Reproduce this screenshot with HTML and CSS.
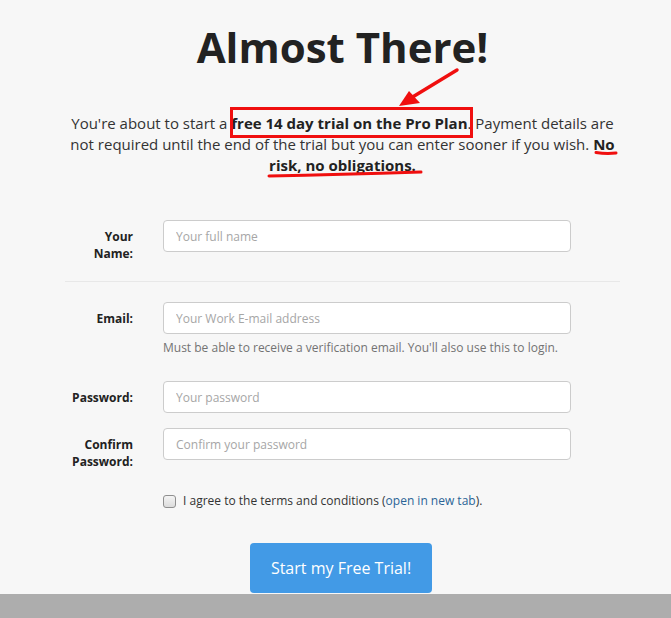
FILE: index.html
```html
<!DOCTYPE html>
<html lang="en">
<head>
<meta charset="utf-8">
<title>Almost There!</title>
<link rel="stylesheet" href="styles.css">
</head>
<body>
<div class="page">
  <main class="container">
    <h1 class="title">Almost There!</h1>
    <p class="intro">You're about to start a <strong>free 14 day trial on the Pro Plan</strong>. Payment details are not required until the end of the trial but you can enter sooner if you wish. <strong>No risk, no obligations.</strong></p>

    <form class="form">
      <div class="row">
        <label class="label">Your<br>Name:</label>
        <div class="field"><input class="input" type="text" placeholder="Your full name"></div>
      </div>
      <hr class="divider">
      <div class="row">
        <label class="label">Email:</label>
        <div class="field">
          <input class="input" type="text" placeholder="Your Work E-mail address">
          <p class="help">Must be able to receive a verification email. You'll also use this to login.</p>
        </div>
      </div>
      <div class="row">
        <label class="label">Password:</label>
        <div class="field"><input class="input" type="password" placeholder="Your password"></div>
      </div>
      <div class="row">
        <label class="label">Confirm<br>Password:</label>
        <div class="field"><input class="input" type="password" placeholder="Confirm your password"></div>
      </div>
      <div class="row check-row">
        <span></span>
        <label class="check"><span class="box"></span>I agree to the terms and conditions (<a href="#" class="link">open in new tab</a>).</label>
      </div>
      <div class="actions">
        <button type="button" class="btn">Start my Free Trial!</button>
      </div>
    </form>
  </main>
  <footer class="footer"></footer>

  <svg class="annot" width="671" height="618" viewBox="0 0 671 618" xmlns="http://www.w3.org/2000/svg">
    <g fill="none" stroke="#f00f0f" stroke-linecap="round" stroke-linejoin="round">
      <rect x="231.5" y="108.5" width="240" height="28" stroke-width="3" stroke-linecap="butt" stroke-linejoin="miter"/>
      <line x1="457" y1="70" x2="406" y2="101" stroke-width="3.5"/>
      <path d="M596 152.5 Q606 154 616 153" stroke-width="3"/>
      <path d="M269 176 Q340 174.5 421 172" stroke-width="3"/>
    </g>
    <polygon points="399,106 409,91 420,103" fill="#f00f0f"/>
  </svg>
</div>
</body>
</html>
```

FILE: styles.css
```css
* { box-sizing: border-box; }

html, body {
  margin: 0;
  padding: 0;
  background: #f7f7f7;
}

body {
  font-family: "Open Sans", "Liberation Sans", sans-serif;
  color: #333;
}

.page {
  position: relative;
  width: 671px;
  height: 618px;
  overflow: hidden;
  display: flex;
  flex-direction: column;
}

.container {
  width: 555px;
  margin-left: 65px;
  flex: 1;
}

.title {
  margin: 20px 0 0;
  font-size: 42px;
  line-height: 54px;
  font-weight: 700;
  text-align: center;
  color: #222;
}

.intro {
  margin: 39px 0 0;
  font-size: 15px;
  line-height: 21px;
  text-align: center;
  color: #333;
}

.intro strong { font-weight: 700; color: #222; }

.form {
  margin-top: 44px;
}

.row {
  display: grid;
  grid-template-columns: 68px 408px;
  column-gap: 30px;
  margin-bottom: 15px;
}

.label {
  text-align: right;
  font-size: 12px;
  line-height: 17px;
  font-weight: 700;
  padding-top: 8px;
  color: #222;
}

.input {
  display: block;
  width: 100%;
  height: 32px;
  border: 1px solid #cccccc;
  border-radius: 4px;
  background: #fff;
  padding: 0 12px;
  font-family: "Open Sans", "Liberation Sans", sans-serif;
  font-size: 12px;
  color: #333;
  outline: none;
}

.input::placeholder { color: #a6a6a6; }

.divider {
  border: 0;
  border-top: 1px solid #e8e8e8;
  margin: 19px 0 20px;
}

.help {
  margin: 5px 0 9px;
  font-size: 12px;
  line-height: 18px;
  color: #737373;
}

.check-row {
  margin-top: 22px;
  margin-bottom: 0;
}

.check {
  display: flex;
  align-items: center;
  font-size: 12px;
  line-height: 18px;
  color: #333;
}

.box {
  width: 13px;
  height: 13px;
  border: 1px solid #8f8f8f;
  border-radius: 3px;
  background: linear-gradient(#f4f4f4, #dcdcdc);
  margin-right: 7px;
  flex: none;
}

.link {
  color: #2a6496;
  text-decoration: none;
}

.actions {
  display: flex;
  margin-top: 33px;
  padding-left: 185px;
}

.btn {
  width: 182px;
  height: 50px;
  border: 0;
  border-radius: 4px;
  background: #429ae6;
  color: #fff;
  font-family: "Open Sans", "Liberation Sans", sans-serif;
  font-size: 16px;
}

.footer {
  height: 24px;
  background: #adadad;
  flex: none;
}

.annot {
  position: absolute;
  top: 0;
  left: 0;
  pointer-events: none;
}
```
